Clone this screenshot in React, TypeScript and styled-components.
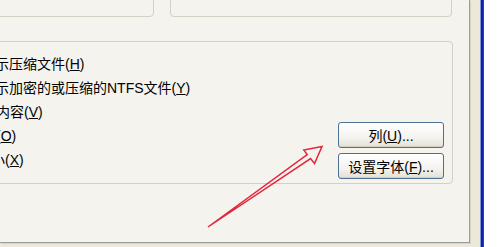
import * as React from 'react';
import styled, { createGlobalStyle } from 'styled-components';

const GlobalStyle = createGlobalStyle`
    html, body {
        margin: 0;
        padding: 0;
        background: #ffffff;
    }
    body {
        font-family: "Liberation Sans", "Noto Sans CJK SC", sans-serif;
        font-size: 14px;
        color: #000;
    }
`

type OptionItem = {
    text: string,
    key: string,
    shift: number
}

// the dialog is cut off at the left edge, so every label starts at its own offset
const options: OptionItem[] = [
    { text: '显示压缩文件', key: 'H', shift: -20 },
    { text: '显示加密的或压缩的NTFS文件', key: 'Y', shift: -20 },
    { text: '内容', key: 'V', shift: -5 },
    { text: '', key: 'O', shift: -5 },
    { text: '小', key: 'X', shift: -10 },
]

export default function App() {
    return (
        <Screen>
            <GlobalStyle />
            <Dialog>
                <TabPanel>
                    <TopRow>
                        <TopBox width={175} />
                        <TopBox width={282} />
                    </TopRow>
                    <Group>
                        <Options>
                            {options.map(o =>
                                <Option key={o.key} shift={o.shift}>
                                    {o.text}(<u>{o.key}</u>)
                                </Option>
                            )}
                        </Options>
                        <Buttons>
                            <Button>列(<u>U</u>)...</Button>
                            <Button>设置字体(<u>F</u>)...</Button>
                        </Buttons>
                    </Group>
                </TabPanel>
            </Dialog>
            <Frame />
            <Arrow width="500" height="247" viewBox="0 0 500 247">
                <polygon
                    points="208,227 307.2,154.6 303.8,150 322,146.5 314.5,163.5 310.6,158.6"
                    fill="none"
                    stroke="#e4263c"
                    strokeWidth="1.5"
                    strokeLinejoin="miter"
                />
            </Arrow>
        </Screen>
    )
}

const Screen = styled.div`
    position: relative;
    width: 500px;
    height: 247px;
    overflow: hidden;
    display: flex;
    background: #ffffff;
`

const Dialog = styled.div`
    width: 470px;
    height: 247px;
    padding: 0 10px 4px 0;
    background: #ece9d8;
    display: flex;
`

const Frame = styled.div`
    width: 4px;
    height: 247px;
    background: linear-gradient(to right, #8596d6 0 1px, #0c22ac 1px 3px, #2a3fbe 3px 4px);
`

const TabPanel = styled.div`
    flex: 1;
    height: 242px;
    background: #f5f3ee;
    border-right: 1px solid #979fa2;
    border-bottom: 1px solid #979fa2;
    box-shadow: 1px 1px 0 #d8d4c4;
    display: flex;
    flex-direction: column;
    padding-right: 16px;
`

const TopRow = styled.div`
    display: flex;
    gap: 16px;
    margin-top: -20px;
    margin-left: -21px;
`

const TopBox = styled.div<{ width: number }>`
    width: ${p => p.width}px;
    height: 37px;
    box-sizing: border-box;
    border: 1px solid #d3d0c4;
    border-radius: 4px;
`

const Group = styled.div`
    margin-top: 24px;
    margin-left: -10px;
    height: 143px;
    box-sizing: border-box;
    border: 1px solid #d3d0c4;
    border-radius: 4px;
    padding: 10px 8px 4px 10px;
    display: flex;
    align-items: flex-end;
`

const Options = styled.div`
    flex: 1;
    align-self: flex-start;
    display: flex;
    flex-direction: column;
`

const Option = styled.div<{ shift: number }>`
    height: 24px;
    line-height: 24px;
    margin-left: ${p => p.shift}px;
    white-space: nowrap;
`

const Buttons = styled.div`
    display: flex;
    flex-direction: column;
    gap: 5px;
`

const Button = styled.button`
    width: 106px;
    height: 26px;
    padding: 0;
    border: 1px solid #4e7095;
    border-radius: 3px;
    background: linear-gradient(#ffffff, #f4f3ee 60%, #e3e0d6);
    box-shadow: inset 0 -1px 0 #d6d0c2;
    font-family: "Liberation Sans", "Noto Sans CJK SC", sans-serif;
    font-size: 14px;
    color: #000;
    text-align: center;
`

const Arrow = styled.svg`
    position: absolute;
    left: 0;
    top: 0;
    pointer-events: none;
`
